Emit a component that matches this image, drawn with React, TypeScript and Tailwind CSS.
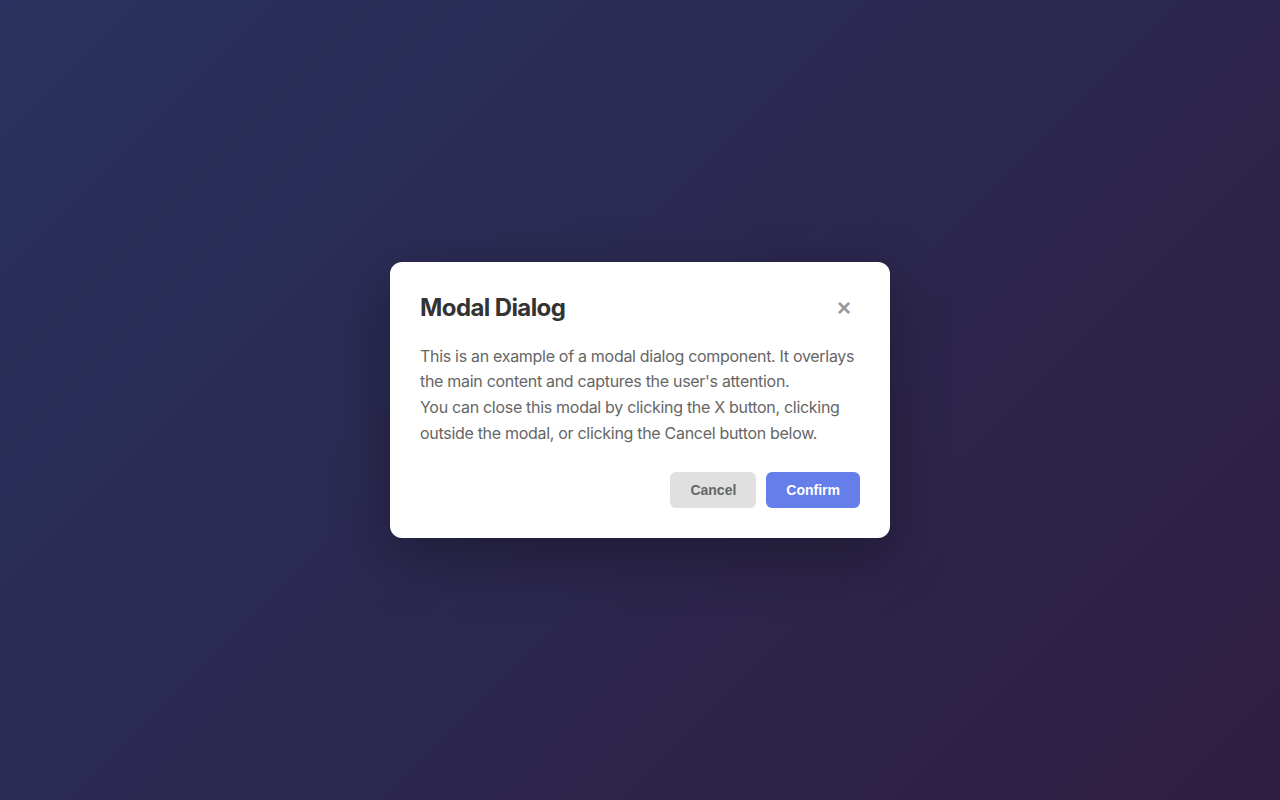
export default function App() {
  return (
    <div className="relative h-screen w-full overflow-hidden bg-[linear-gradient(135deg,#667eea_0%,#764ba2_100%)] font-['Inter',sans-serif]">
      <div className="absolute inset-0 flex items-center justify-center bg-black/60">
        <div className="w-[500px] rounded-xl bg-white p-[30px] shadow-[0_20px_60px_rgba(0,0,0,0.3)]">
          <div className="mb-5 flex items-center justify-between">
            <h2 className="text-2xl font-bold tracking-[-0.6px] text-[#333]">Modal Dialog</h2>
            <button className="flex h-8 w-8 items-center justify-center text-2xl leading-none text-[#999] font-['Liberation_Sans',sans-serif] font-bold">
              ×
            </button>
          </div>
          <div className="text-base leading-[1.6] tracking-[-0.3px] text-[#666]">
            <p>This is an example of a modal dialog component. It overlays the main content and captures the user's attention.</p>
            <p>You can close this modal by clicking the X button, clicking outside the modal, or clicking the Cancel button below.</p>
          </div>
          <div className="mt-[26px] flex justify-end gap-2.5 font-['Liberation_Sans',sans-serif]">
            <button className="rounded-md bg-[#e0e0e0] px-5 py-2.5 text-sm font-bold leading-4 text-[#666]">Cancel</button>
            <button className="rounded-md bg-[#667eea] px-5 py-2.5 text-sm font-bold leading-4 text-white">Confirm</button>
          </div>
        </div>
      </div>
    </div>
  );
}
